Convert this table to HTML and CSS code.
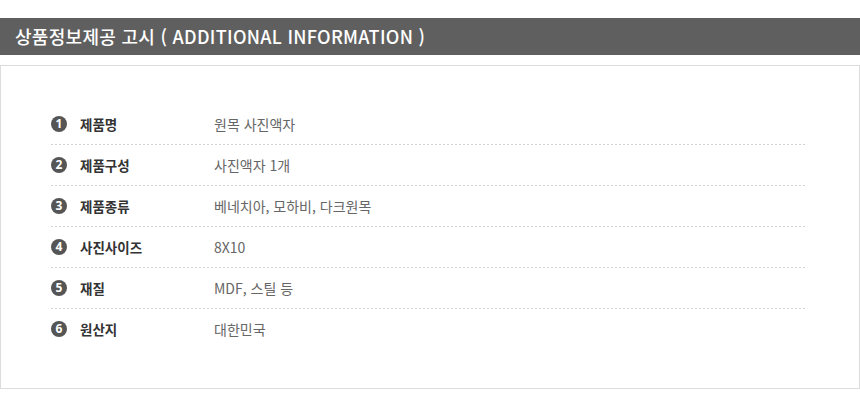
FILE: index.html
```html
<!DOCTYPE html>
<html lang="ko">
<head>
<meta charset="utf-8">
<link rel="stylesheet" href="styles.css">
</head>
<body>
<div class="page">
  <h2 class="title">상품정보제공 고시 ( ADDITIONAL INFORMATION )</h2>
  <div class="box">
    <ul class="list">
      <li class="row"><span class="num">1</span><span class="label">제품명</span><span class="value">원목 사진액자</span></li>
      <li class="row"><span class="num">2</span><span class="label">제품구성</span><span class="value">사진액자 1개</span></li>
      <li class="row"><span class="num">3</span><span class="label">제품종류</span><span class="value">베네치아, 모하비, 다크원목</span></li>
      <li class="row"><span class="num">4</span><span class="label">사진사이즈</span><span class="value">8X10</span></li>
      <li class="row"><span class="num">5</span><span class="label">재질</span><span class="value">MDF, 스틸 등</span></li>
      <li class="row"><span class="num">6</span><span class="label">원산지</span><span class="value">대한민국</span></li>
    </ul>
  </div>
</div>
</body>
</html>
```
FILE: styles.css
```css
* { box-sizing: border-box; }
html, body { margin: 0; padding: 0; background: #fff; }
body {
  font-family: "Noto Sans CJK KR", "Noto Sans", sans-serif;
  width: 860px;
}
.page { padding-top: 18px; }
.title {
  margin: 0;
  height: 37px;
  background: #5f5f5f;
  color: #fff;
  font-size: 18px;
  font-weight: 500;
  line-height: 37px;
  padding-left: 15px;
  letter-spacing: 0.3px;
}
.box {
  margin-top: 10px;
  border: 1px solid #dcdcdc;
  height: 324px;
  padding: 38px 0 0 50px;
}
.list {
  list-style: none;
  margin: 0;
  padding: 0;
  width: 754px;
}
.row {
  display: flex;
  align-items: center;
  height: 41px;
  padding-bottom: 1px;
  background: repeating-linear-gradient(to right, #d2d2d2 0 2px, transparent 2px 4px) left bottom / 100% 1px no-repeat;
}
.row:last-child { background: none; }
.num {
  width: 16px;
  height: 16px;
  border-radius: 50%;
  background: #555;
  color: #fff;
  font-size: 12px;
  font-weight: 700;
  line-height: 16px;
  text-align: center;
  flex: none;
  font-family: "Open Sans", "Noto Sans", sans-serif;
}
.label {
  margin-left: 13px;
  width: 134px;
  flex: none;
  font-size: 13.5px;
  font-weight: 700;
  color: #333;
}
.value {
  font-size: 14px;
  color: #666;
}
```
